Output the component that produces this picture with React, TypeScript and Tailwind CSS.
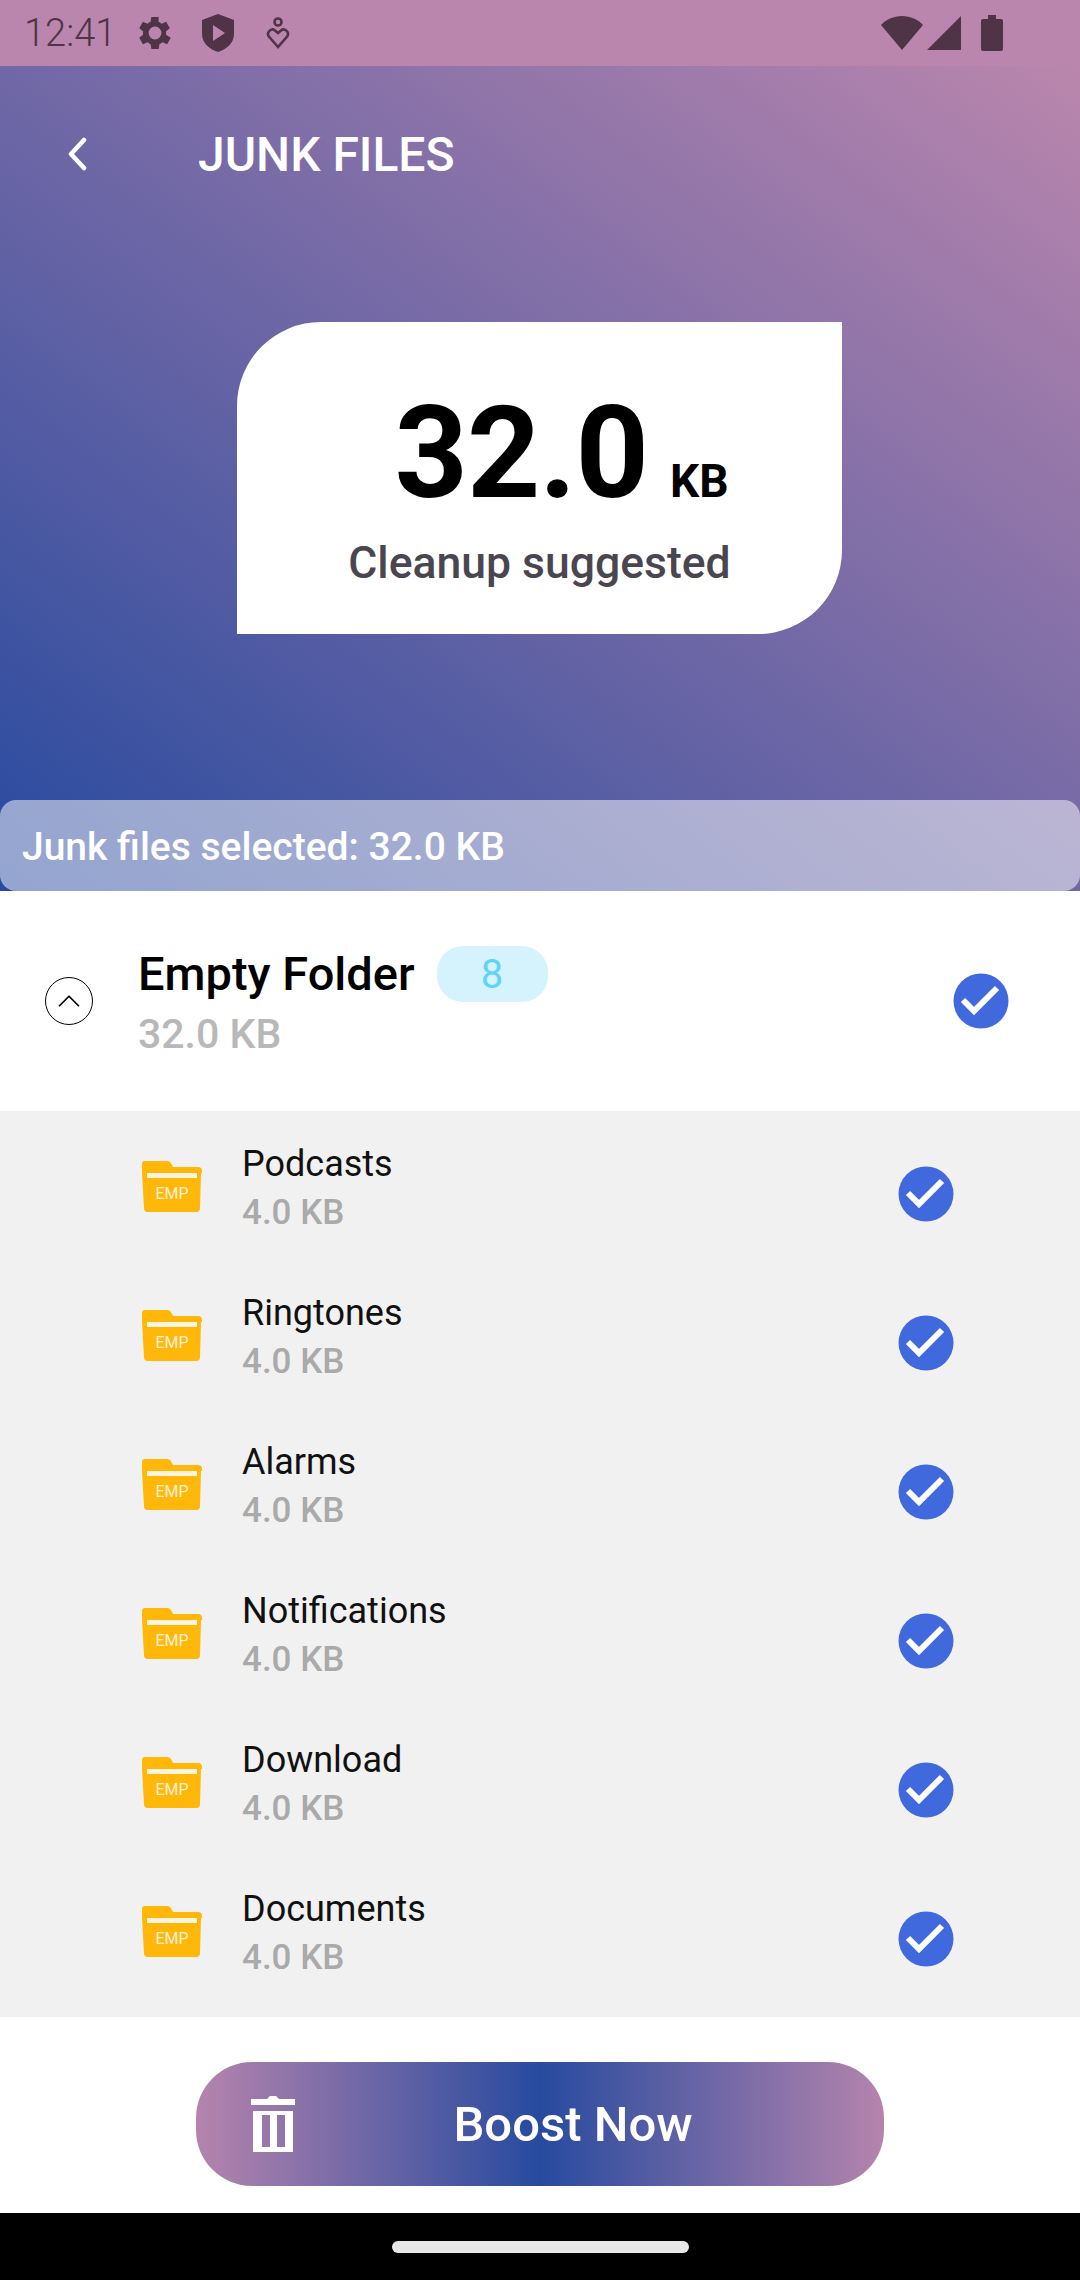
import { ChevronUp } from 'lucide-react'

const folders = ['Podcasts', 'Ringtones', 'Alarms', 'Notifications', 'Download', 'Documents']

function CheckBadge() {
  return (
    <svg width="56" height="56" viewBox="0 0 56 56" className="shrink-0">
      <circle cx="28" cy="28" r="27.5" fill="#3f69dd" />
      <path d="M10 27 L21 38 L44 15" fill="none" stroke="#fff" strokeWidth="6" />
    </svg>
  )
}

function FolderIcon() {
  return (
    <div className="relative h-[51px] w-[60px] shrink-0">
      <svg width="60" height="51" viewBox="0 0 60 51" className="block">
        <path
          d="M3 0 H25 Q28 0 29.500 3 L31 6 H56 Q60 6 60 10 V12 H59 L58 47 Q58 51 54 51 H6 Q2 51 2 47 L0 12 V3 Q0 0 3 0 Z"
          fill="#ffb70a"
        />
        <rect x="5" y="12" width="50" height="5" fill="#fff5dc" />
      </svg>
      <span className="absolute inset-x-0 top-[24px] text-center text-[16px] leading-[18px] text-[#fff3d6]">
        EMP
      </span>
    </div>
  )
}

function FolderRow({ name }: { name: string }) {
  return (
    <div className="flex h-[149px] shrink-0 items-start pl-[142px] pr-[126px]">
      <div className="mt-[50px]">
        <FolderIcon />
      </div>
      <div className="ml-[40px] mt-[30px] flex-1">
        <p className="text-[36px] leading-[46px] text-[#111]">{name}</p>
        <p className="mt-[3px] text-[35px] leading-[46px] font-medium text-[#aaaaaa]">4.0 KB</p>
      </div>
      <div className="mt-[55px]">
        <CheckBadge />
      </div>
    </div>
  )
}

function StatusBar() {
  return (
    <div className="flex h-[66px] shrink-0 items-center bg-[#ba86ad] pl-[24px] pr-[77px] text-[#4f3447]">
      <span className="w-[110px] text-[38px] leading-[66px] font-light">12:41</span>
      {/* settings gear */}
      <svg width="44" height="44" viewBox="0 0 24 24" fill="currentColor" className="ml-[-1px]">
        <path d="M19.400 13a7.500 7.500 0 0 0 0-2l2.100-1.600-2-3.500-2.500 1a7.600 7.600 0 0 0-1.700-1L15.400 3.300h-4l-.4 2.600a7.600 7.600 0 0 0-1.700 1l-2.500-1-2 3.500L6.900 11a7.500 7.500 0 0 0 0 2l-2.100 1.600 2 3.500 2.500-1c.5.400 1.100.7 1.700 1l.4 2.600h4l.4-2.600c.6-.3 1.200-.6 1.700-1l2.500 1 2-3.500zM13.400 15.500a3.500 3.500 0 1 1 0-7 3.500 3.500 0 0 1 0 7z" transform="translate(-1.400 0)" />
      </svg>
      {/* shield with play */}
      <svg width="32" height="38" viewBox="0 0 32 38" className="ml-[25px]">
        <path d="M16 0 L32 6 V20 C32 29 25 35 16 38 C7 35 0 29 0 20 V6 Z" fill="currentColor" />
        <path d="M11 11 L23 19 L11 27 Z" fill="#ba86ad" />
      </svg>
      {/* storage / person heart glyph */}
      <svg width="24" height="32" viewBox="0 0 24 32" fill="none" stroke="currentColor" strokeWidth="2.600" className="ml-[32px]">
        <circle cx="12" cy="5" r="3.500" />
        <path d="M12 30 L2.500 19 C0.500 15 5.500 10.500 9 13.500 L12 16 L15 13.500 C18.500 10.500 23.500 15 21.500 19 Z" />
      </svg>
      <div className="flex-1" />
      {/* wifi */}
      <svg width="42" height="34" viewBox="0 0 42 34" fill="currentColor">
        <path d="M21 34 L0 9 C5 3.500 12.500 0 21 0 C29.500 0 37 3.500 42 9 Z" />
      </svg>
      {/* signal */}
      <svg width="34" height="34" viewBox="0 0 34 34" fill="currentColor" className="ml-[4px]">
        <path d="M34 0 V34 H0 Z" />
      </svg>
      {/* battery */}
      <svg width="22" height="36" viewBox="0 0 22 36" fill="currentColor" className="ml-[20px]">
        <path d="M7 0 H15 V4 H20 Q22 4 22 6 V34 Q22 36 20 36 H2 Q0 36 0 34 V6 Q0 4 2 4 H7 Z" />
      </svg>
    </div>
  )
}

export default function App() {
  return (
    <div className="flex h-[2280px] w-[1080px] flex-col overflow-hidden bg-white font-['Roboto',sans-serif]">
      <StatusBar />

      {/* Gradient hero with the size card and the selected strip. */}
      <div className="flex h-[825px] shrink-0 flex-col bg-[linear-gradient(to_top_right,#274a9f,#ba86ad)]">
        <div className="flex h-[176px] shrink-0 items-center">
          <svg width="20" height="34" viewBox="0 0 20 34" fill="none" stroke="#fff" strokeWidth="4.500" strokeLinecap="round" strokeLinejoin="round" className="ml-[67px]">
            <path d="M17 3 L4 17 L17 31" />
          </svg>
          <h1 className="ml-[111px] mt-[2px] text-[48px] leading-[56px] font-medium text-white">JUNK FILES</h1>
        </div>

        <div className="ml-[237px] mt-[80px] flex h-[312px] w-[605px] shrink-0 flex-col items-center rounded-tl-[84px] rounded-br-[84px] bg-white">
          <div className="mt-[56px] flex items-baseline pl-[44px] text-black">
            <span className="text-[128px] leading-[150px] font-bold tracking-[-1px]">32.0</span>
            <span className="ml-[22px] text-[46px] leading-[50px] font-bold">KB</span>
          </div>
          <p className="mt-[7px] text-[44.500px] leading-[56px] font-medium text-[#4a4650]">Cleanup suggested</p>
        </div>

        <div className="mt-auto flex h-[91px] shrink-0 items-center rounded-[16px] bg-white/50 pl-[22px]">
          <span className="mt-[2px] text-[39px] leading-[48px] font-medium text-white">Junk files selected: 32.0 KB</span>
        </div>
      </div>

      {/* Group header */}
      <div className="relative flex h-[220px] shrink-0 items-center bg-white pl-[45px] pr-[71px]">
        <div className="flex h-[48px] w-[48px] shrink-0 items-center justify-center rounded-full border-[1.5px] border-black">
          <ChevronUp size={38} strokeWidth={1.100} className="text-black" />
        </div>
        <div className="ml-[45px] mt-[1px] flex-1">
          <div className="flex items-center">
            <span className="text-[47px] leading-[56px] font-medium text-black">Empty Folder</span>
            <span className="ml-[22px] flex h-[56px] w-[111px] items-center justify-center rounded-[26px] bg-[#d4f3fd] pt-[2px] text-[40px] text-[#5fd3fb]">
              8
            </span>
          </div>
          <p className="mt-[8px] text-[41px] leading-[48px] font-medium text-[#b8b8b8]">32.0 KB</p>
        </div>
        <CheckBadge />
      </div>

      <div className="flex min-h-0 flex-1 flex-col overflow-hidden bg-[#f1f1f1]">
        {folders.map((name) => (
          <FolderRow key={name} name={name} />
        ))}
      </div>

      {/* Bottom action */}
      <div className="flex h-[196px] shrink-0 justify-center bg-white pt-[45px]">
        <button
          type="button"
          className="relative flex h-[124px] w-[688px] items-center justify-center rounded-[56px] bg-[linear-gradient(to_right,#b584ad,#274a9f_50%,#b584ad)]"
        >
          <svg width="44" height="56" viewBox="0 0 44 56" fill="#fff" className="absolute left-[55px] top-[34px]">
            <path d="M0 3 H16 L19 0 H25 L28 3 H44 V9 H0 Z" />
            <path fillRule="evenodd" d="M2 15 H42 V56 H2 Z M11 19 V51 H19 V19 Z M26 19 V51 H34 V19 Z" />
          </svg>
          <span className="mt-[2px] pl-[66px] text-[49px] leading-[60px] font-medium text-white">Boost Now</span>
        </button>
      </div>

      {/* Gesture nav */}
      <div className="flex h-[67px] shrink-0 items-center justify-center bg-black">
        <div className="h-[12px] w-[297px] rounded-full bg-[#e8e8e8]" />
      </div>
    </div>
  )
}
